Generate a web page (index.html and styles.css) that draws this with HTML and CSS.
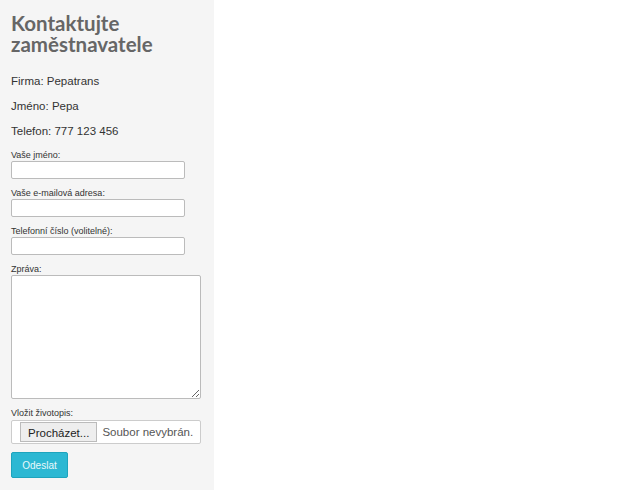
FILE: index.html
```html
<!DOCTYPE html>
<html lang="cs">
<head>
    <meta charset="UTF-8">
    <title>Kontaktujte zaměstnavatele</title>
    <link rel="stylesheet" href="styles.css">
</head>
<body>
    <div class="sidebar">
        <h1>Kontaktujte zaměstnavatele</h1>

        <p class="info">Firma: Pepatrans</p>
        <p class="info">Jméno: Pepa</p>
        <p class="info">Telefon: 777 123 456</p>

        <form class="contact-form">
            <label for="name">Vaše jméno:</label>
            <input type="text" id="name" class="field">

            <label for="email">Vaše e-mailová adresa:</label>
            <input type="text" id="email" class="field">

            <label for="phone">Telefonní číslo (volitelné):</label>
            <input type="text" id="phone" class="field">

            <label for="message">Zpráva:</label>
            <textarea id="message" class="message"></textarea>

            <label class="file-label">Vložit životopis:</label>
            <div class="file-input">
                <span class="file-btn">Procházet...</span>
                <span class="file-name">Soubor nevybrán.</span>
            </div>

            <button type="button" class="send-btn">Odeslat</button>
        </form>
    </div>
</body>
</html>
```

FILE: styles.css
```css
body {
    margin: 0;
    font-family: 'Liberation Sans', Arial, sans-serif;
    background: white;
}

.sidebar {
    width: 214px;
    height: 490px;
    box-sizing: border-box;
    padding: 13px 0 0 11px;
    background-color: #f5f5f5;
}

h1 {
    font-family: Lato, sans-serif;
    font-weight: bold;
    font-size: 20.5px;
    line-height: 21px;
    color: #666;
    margin: 0 0 14px 0;
}

.info {
    font-size: 11.5px;
    color: #333;
    margin: 0;
    line-height: 25px;
}

.contact-form {
    display: flex;
    flex-direction: column;
    align-items: flex-start;
    margin-top: 5px;
}

label {
    font-size: 9px;
    color: #333;
    line-height: 12px;
}

.field {
    width: 174px;
    height: 18px;
    box-sizing: border-box;
    border: 1px solid #bbb;
    border-radius: 2px;
    background: white;
    margin: 0 0 8px 0;
    padding: 0;
}

.message {
    width: 190px;
    height: 124px;
    box-sizing: border-box;
    border: 1px solid #bbb;
    border-radius: 2px;
    background: white;
    margin: 0 0 8px 0;
    resize: both;
}

.file-label {
    margin-bottom: 1px;
}

.file-input {
    display: flex;
    align-items: center;
    width: 190px;
    height: 24px;
    box-sizing: border-box;
    border: 1px solid #ccc;
    border-radius: 2px;
    background: white;
    margin-bottom: 8px;
    padding-left: 8px;
    font-size: 11.5px;
    white-space: nowrap;
}

.file-btn {
    height: 20px;
    line-height: 20px;
    box-sizing: border-box;
    padding: 0 7px;
    background: #eee;
    border: 1px solid #bbb;
    color: #222;
}

.file-name {
    color: #555;
    margin-left: 5px;
}

.send-btn {
    width: 57px;
    height: 26px;
    border: 1px solid #1ea4bd;
    border-radius: 2px;
    background-color: #2cb8d3;
    color: #e8f8fb;
    font-family: 'Liberation Sans', Arial, sans-serif;
    font-size: 10px;
    padding: 0;
}
```
